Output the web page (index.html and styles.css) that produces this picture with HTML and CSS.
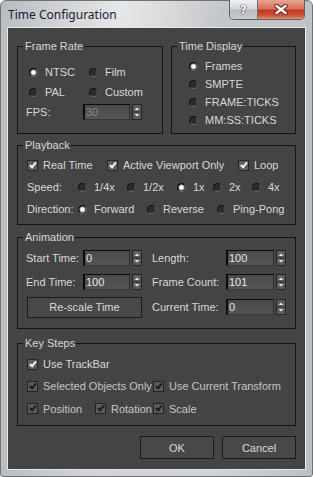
FILE: index.html
```html
<!DOCTYPE html>
<html lang="en">
<head>
  <meta charset="UTF-8">
  <title>Time Configuration</title>
  <link rel="stylesheet" href="styles.css">
</head>
<body>
  <div class="window">
    <div class="titlebar">
      <span class="title">Time Configuration</span>
      <div class="caption-buttons">
        <div class="cap-btn help">?</div>
        <div class="cap-btn close">
          <svg width="14" height="11" viewBox="0 0 14 11">
            <path d="M2.5 2 L11.5 9 M11.5 2 L2.5 9" stroke="#6b2418" stroke-width="4.4" stroke-linecap="round"/>
            <path d="M2.5 2 L11.5 9 M11.5 2 L2.5 9" stroke="#fff" stroke-width="2.4" stroke-linecap="round"/>
          </svg>
        </div>
      </div>
    </div>

    <div class="client">
      <div class="top-row">
        <fieldset class="group frame-rate">
          <legend>Frame Rate</legend>
          <div class="fr-body">
            <div class="row fr-row">
              <label class="opt"><span class="radio on"></span>NTSC</label>
              <label class="opt"><span class="radio"></span>Film</label>
            </div>
            <div class="row fr-row">
              <label class="opt"><span class="radio"></span>PAL</label>
              <label class="opt"><span class="radio"></span>Custom</label>
            </div>
            <div class="row num-row fps-row">
              <span class="lbl-a">FPS:</span>
              <input class="field dim" value="30">
              <span class="spin"><svg width="10" height="16" viewBox="0 0 10 16"><rect x="0.5" y="0.5" width="9" height="15" fill="#5b5b5b" stroke="#262626"/><line x1="1" y1="8" x2="9" y2="8" stroke="#333"/><path d="M2.5 6 L5 3.5 L7.5 6 Z" fill="#e4e4e4"/><path d="M2.5 10 L5 12.5 L7.5 10 Z" fill="#e4e4e4"/></svg></span>
            </div>
          </div>
        </fieldset>

        <fieldset class="group time-display">
          <legend>Time Display</legend>
          <div class="td-body">
            <label class="opt td-row"><span class="radio on"></span>Frames</label>
            <label class="opt td-row"><span class="radio"></span>SMPTE</label>
            <label class="opt td-row"><span class="radio"></span>FRAME:TICKS</label>
            <label class="opt td-row"><span class="radio"></span>MM:SS:TICKS</label>
          </div>
        </fieldset>
      </div>

      <fieldset class="group playback">
        <legend>Playback</legend>
        <div class="pb-body">
          <div class="row pb-checks">
            <label class="opt chk-opt"><span class="check on"></span>Real Time</label>
            <label class="opt chk-opt"><span class="check on"></span>Active Viewport Only</label>
            <label class="opt chk-opt"><span class="check on"></span>Loop</label>
          </div>
          <div class="row pb-speed">
            <span>Speed:</span>
            <label class="opt"><span class="radio"></span>1/4x</label>
            <label class="opt"><span class="radio"></span>1/2x</label>
            <label class="opt"><span class="radio on"></span>1x</label>
            <label class="opt"><span class="radio"></span>2x</label>
            <label class="opt"><span class="radio"></span>4x</label>
          </div>
          <div class="row pb-dir">
            <span>Direction:</span>
            <label class="opt"><span class="radio on"></span>Forward</label>
            <label class="opt"><span class="radio"></span>Reverse</label>
            <label class="opt"><span class="radio"></span>Ping-Pong</label>
          </div>
        </div>
      </fieldset>

      <fieldset class="group animation">
        <legend>Animation</legend>
        <div class="an-body">
          <div class="row num-row an-row">
            <span class="lbl-a">Start Time:</span>
            <input class="field" value="0">
            <span class="spin"><svg width="10" height="16" viewBox="0 0 10 16"><rect x="0.5" y="0.5" width="9" height="15" fill="#5b5b5b" stroke="#262626"/><line x1="1" y1="8" x2="9" y2="8" stroke="#333"/><path d="M2.5 6 L5 3.5 L7.5 6 Z" fill="#e4e4e4"/><path d="M2.5 10 L5 12.5 L7.5 10 Z" fill="#e4e4e4"/></svg></span>
            <span class="lbl-b">Length:</span>
            <input class="field wide" value="100">
            <span class="spin"><svg width="10" height="16" viewBox="0 0 10 16"><rect x="0.5" y="0.5" width="9" height="15" fill="#5b5b5b" stroke="#262626"/><line x1="1" y1="8" x2="9" y2="8" stroke="#333"/><path d="M2.5 6 L5 3.5 L7.5 6 Z" fill="#e4e4e4"/><path d="M2.5 10 L5 12.5 L7.5 10 Z" fill="#e4e4e4"/></svg></span>
          </div>
          <div class="row num-row an-row">
            <span class="lbl-a">End Time:</span>
            <input class="field" value="100">
            <span class="spin"><svg width="10" height="16" viewBox="0 0 10 16"><rect x="0.5" y="0.5" width="9" height="15" fill="#5b5b5b" stroke="#262626"/><line x1="1" y1="8" x2="9" y2="8" stroke="#333"/><path d="M2.5 6 L5 3.5 L7.5 6 Z" fill="#e4e4e4"/><path d="M2.5 10 L5 12.5 L7.5 10 Z" fill="#e4e4e4"/></svg></span>
            <span class="lbl-b">Frame Count:</span>
            <input class="field wide" value="101">
            <span class="spin"><svg width="10" height="16" viewBox="0 0 10 16"><rect x="0.5" y="0.5" width="9" height="15" fill="#5b5b5b" stroke="#262626"/><line x1="1" y1="8" x2="9" y2="8" stroke="#333"/><path d="M2.5 6 L5 3.5 L7.5 6 Z" fill="#e4e4e4"/><path d="M2.5 10 L5 12.5 L7.5 10 Z" fill="#e4e4e4"/></svg></span>
          </div>
          <div class="row num-row an-row last">
            <button class="btn rescale">Re-scale Time</button>
            <span class="lbl-b">Current Time:</span>
            <input class="field wide" value="0">
            <span class="spin"><svg width="10" height="16" viewBox="0 0 10 16"><rect x="0.5" y="0.5" width="9" height="15" fill="#5b5b5b" stroke="#262626"/><line x1="1" y1="8" x2="9" y2="8" stroke="#333"/><path d="M2.5 6 L5 3.5 L7.5 6 Z" fill="#e4e4e4"/><path d="M2.5 10 L5 12.5 L7.5 10 Z" fill="#e4e4e4"/></svg></span>
          </div>
        </div>
      </fieldset>

      <fieldset class="group key-steps">
        <legend>Key Steps</legend>
        <div class="ks-body">
          <div class="row ks-row1">
            <label class="opt chk-opt"><span class="check on"></span>Use TrackBar</label>
          </div>
          <div class="row ks-row2">
            <label class="opt chk-opt off"><span class="check on"></span>Selected Objects Only</label>
            <label class="opt chk-opt off"><span class="check on"></span>Use Current Transform</label>
          </div>
          <div class="row ks-row3">
            <label class="opt chk-opt off"><span class="check on"></span>Position</label>
            <label class="opt chk-opt off"><span class="check on"></span>Rotation</label>
            <label class="opt chk-opt off"><span class="check on"></span>Scale</label>
          </div>
        </div>
      </fieldset>

      <div class="actions">
        <button class="btn">OK</button>
        <button class="btn">Cancel</button>
      </div>
    </div>
  </div>
</body>
</html>
```

FILE: styles.css
```css
body {
  margin: 0;
  font-family: "Liberation Sans", Arial, sans-serif;
  font-size: 11px;
  background: #ffffff;
}

.window {
  width: 313px;
  height: 477px;
  box-sizing: border-box;
  border: 1px solid #6f7377;
  border-radius: 6px 6px 3px 3px;
  background: linear-gradient(to right, #b9bdc1, #d3d5d8 30%, #cfd2d5 70%, #bcc0c4);
  display: flex;
  flex-direction: column;
}

/* title bar */
.titlebar {
  height: 27px;
  display: flex;
  align-items: flex-start;
  border-radius: 6px 6px 0 0;
  background: linear-gradient(100deg, #b7bbbf 0%, #cfd1d4 18%, #e6e7e8 38%, #dadbdd 52%, #c5c8cb 70%, #bfc2c6 100%);
}

.title {
  margin: 6px 0 0 7px;
  font-family: "Noto Sans", "Open Sans", sans-serif;
  font-size: 12px;
  line-height: 16px;
  color: #1c1c36;
}

.caption-buttons {
  margin: -1px 7px 0 auto;
  display: flex;
  border: 1px solid #5d6166;
  border-top: none;
  border-radius: 0 0 5px 5px;
  overflow: hidden;
}

.cap-btn {
  height: 19px;
  display: flex;
  align-items: center;
  justify-content: center;
}

.help {
  width: 27px;
  border-right: 1px solid #6b6f73;
  background: linear-gradient(#f1f2f3, #d6d8da 45%, #b9bcbf 55%, #c9cbcd);
  color: #ffffff;
  font-family: "DejaVu Sans", sans-serif;
  font-weight: bold;
  font-size: 12px;
  text-shadow: 0 0 1px #3c3c3c, 0 0 1px #3c3c3c, 0 0 1px #3c3c3c;
}

.close {
  width: 46px;
  background: linear-gradient(#e9a597, #d9705c 45%, #c2361f 55%, #cf5a3e 85%, #e29a7c);
}

/* client area */
.client {
  margin: 0 7px;
  height: 441px;
  box-sizing: border-box;
  padding: 11px 9px 0;
  background: #444444;
  box-shadow: 0 0 0 1px #e6e7e8;
  color: #d8d8d8;
}

.top-row {
  display: flex;
  gap: 8px;
}

.group {
  margin: 0;
  padding: 0;
  min-width: 0;
  box-sizing: border-box;
  border: 1px solid #141414;
}

.group legend {
  margin-left: 5px;
  padding: 0 1px 0 2px;
  line-height: 14px;
  color: #d8d8d4;
}

.frame-rate {
  width: 146px;
  height: 95px;
}

.time-display {
  width: 125px;
  height: 95px;
}

.playback {
  height: 87px;
  margin-top: 4px;
}

.animation {
  height: 99px;
  margin-top: 5px;
}

.key-steps {
  height: 90px;
  margin-top: 7px;
}

.row {
  display: grid;
  align-items: center;
  white-space: nowrap;
}

.opt {
  display: flex;
  align-items: center;
  gap: 7px;
  white-space: nowrap;
}

.chk-opt {
  gap: 5px;
}

.chk-opt.off {
  color: #c4c4c4;
}

/* radio + check */
.radio {
  flex: none;
  width: 7px;
  height: 7px;
  border-radius: 50%;
  border: 1px solid;
  border-color: #141414 #5e5e5e #6a6a6a #141414;
  background: #2c2c2c;
}

.radio.on {
  background: radial-gradient(circle, #ffffff 0 1.6px, #b8b8b8 2.4px, #2c2c2c 3.4px);
}

.check {
  flex: none;
  width: 9px;
  height: 9px;
  border: 1px solid #262626;
  background: #5e5e5e;
  position: relative;
}

.check.on::after {
  content: "";
  position: absolute;
  left: 3px;
  top: 0;
  width: 2px;
  height: 5px;
  border: solid #f2f2f2;
  border-width: 0 2px 2px 0;
  transform: rotate(40deg);
}

.chk-opt.off .check {
  background: #5a5a5a;
  border-color: #222222;
}

.chk-opt.off .check.on::after {
  border-color: #1c1c1c;
}

/* frame rate */
.fr-body {
  padding-top: 9px;
}

.fr-row {
  height: 20px;
  padding-left: 11px;
  grid-template-columns: 60px auto;
}

.num-row {
  display: flex;
  align-items: center;
}

.fps-row {
  height: 20px;
  padding-left: 8px;
}

.lbl-a {
  width: 57px;
  flex: none;
}

.lbl-b {
  width: 74px;
  flex: none;
  margin-left: 10px;
}

.field {
  width: 47px;
  height: 16px;
  box-sizing: border-box;
  margin: 0;
  padding: 0 1px;
  border: 1px solid;
  border-left-width: 2px;
  border-color: #0c0c0c #2e2e2e #363636 #0c0c0c;
  background: linear-gradient(#4a4a4a, #555555);
  color: #e6e6e6;
  font: inherit;
  line-height: 14px;
  outline: none;
}

.field.wide {
  width: 48px;
}

.field.dim {
  color: #868a96;
}

.spin {
  display: flex;
  margin-left: 2px;
}

/* time display */
.td-body {
  padding: 4px 0 0 17px;
}

.td-row {
  height: 18px;
}

/* playback */
.pb-body {
  padding: 2px 0 0 9px;
}

.pb-body .row {
  height: 22px;
}

.pb-checks {
  grid-template-columns: 80px 131px auto;
}

.pb-speed {
  grid-template-columns: 51px 49px 50px 36px 39px auto;
}

.pb-dir {
  grid-template-columns: 51px 69px 70px auto;
}

/* animation */
.an-body {
  padding: 2px 0 0 8px;
}

.an-row {
  height: 24px;
}

.an-row.last {
  height: 26px;
}

.btn {
  margin: 0;
  padding: 0;
  border: 1px solid #1b1b1b;
  background: #484848;
  color: #dadada;
  font: inherit;
}

.rescale {
  width: 115px;
  height: 21px;
  margin-left: 1px;
  flex: none;
}

/* key steps */
.ks-body {
  padding: 3px 0 0 9px;
}

.ks-row1, .ks-row2 {
  height: 22px;
}

.ks-row3 {
  height: 23px;
}

.ks-row2 {
  grid-template-columns: 126px auto;
}

.ks-row3 {
  grid-template-columns: 68px 58px auto;
}

.actions {
  display: flex;
  justify-content: flex-end;
  gap: 8px;
  margin-top: 10px;
}

.actions .btn {
  width: 74px;
  height: 23px;
}
```
